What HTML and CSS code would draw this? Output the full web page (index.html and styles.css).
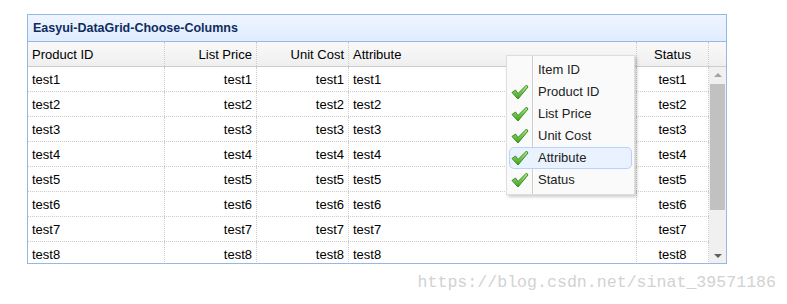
FILE: index.html
```html
<!DOCTYPE html>
<html lang="en">
<head>
    <meta charset="UTF-8">
    <title>Easyui-DataGrid-Choose-Columns</title>
    <link rel="stylesheet" href="styles.css">
</head>
<body>
    <div class="page">
        <div class="panel">
            <div class="panel-title">Easyui-DataGrid-Choose-Columns</div>
            <div class="grid-head">
                <div class="cell c-id">Product ID</div>
                <div class="cell c-list right">List Price</div>
                <div class="cell c-cost right">Unit Cost</div>
                <div class="cell c-attr">Attribute</div>
                <div class="cell c-status center">Status</div>
                <div class="cell c-pad"></div>
            </div>
            <div class="grid-body">
                <div class="rows" id="rows"></div>
                <div class="scrollbar">
                    <div class="arrow up"></div>
                    <div class="thumb"></div>
                    <div class="track"></div>
                    <div class="arrow down"></div>
                </div>
            </div>

            <div class="menu">
                <div class="menu-line"></div>
                <div class="menu-item"><span class="icon"></span><span class="label">Item ID</span></div>
                <div class="menu-item checked"><span class="icon"></span><span class="label">Product ID</span></div>
                <div class="menu-item checked"><span class="icon"></span><span class="label">List Price</span></div>
                <div class="menu-item checked"><span class="icon"></span><span class="label">Unit Cost</span></div>
                <div class="menu-item checked active"><span class="icon"></span><span class="label">Attribute</span></div>
                <div class="menu-item checked"><span class="icon"></span><span class="label">Status</span></div>
            </div>
        </div>
        <div class="watermark">https://blog.csdn.net/sinat_39571186</div>
    </div>

    <script>
        // строки таблицы
        var rows = document.getElementById('rows');
        var html = '';
        for (var i = 1; i <= 8; i++) {
            var v = 'test' + i;
            html += '<div class="row">' +
                '<div class="cell c-id">' + v + '</div>' +
                '<div class="cell c-list right">' + v + '</div>' +
                '<div class="cell c-cost right">' + v + '</div>' +
                '<div class="cell c-attr">' + v + '</div>' +
                '<div class="cell c-status center">' + v + '</div>' +
                '</div>';
        }
        rows.innerHTML = html;

        // галочки в меню
        var check = '<svg width="18" height="16" viewBox="0 0 18 16">' +
            '<defs><linearGradient id="g" x1="0" y1="0" x2="0" y2="1">' +
            '<stop offset="0" stop-color="#b4ec88"/><stop offset="1" stop-color="#3aa01c"/>' +
            '</linearGradient></defs>' +
            '<path d="M1 8.5 L4.5 6 L7 9.5 L15.5 1 L17 3 L7 15 Z" fill="url(#g)" stroke="#3b8c24" stroke-width="1" stroke-linejoin="round"/>' +
            '</svg>';
        var icons = document.querySelectorAll('.menu-item.checked .icon');
        for (var j = 0; j < icons.length; j++) {
            icons[j].innerHTML = check;
        }
    </script>
</body>
</html>
```

FILE: styles.css
```css
body {
    margin: 0;
    font-family: 'Liberation Sans', Arial, sans-serif;
    font-size: 13px;
    color: #000;
    background: #fff;
}

.page {
    padding: 14px 0 0 27px;
    width: 760px;
}

.panel {
    width: 698px;
    border: 1px solid #95b8e7;
    position: relative;
}

.panel-title {
    height: 26px;
    line-height: 27px;
    padding-left: 5px;
    font-size: 12.5px;
    font-weight: bold;
    color: #0e2d5f;
    background: linear-gradient(to bottom, #eff5ff 0%, #e0ecff 100%);
    border-bottom: 1px solid #95b8e7;
}

.grid-head {
    display: flex;
    height: 24px;
    background: linear-gradient(to bottom, #f9f9f9 0%, #efefef 100%);
    border-bottom: 1px solid #ccc;
}

.cell {
    box-sizing: border-box;
    padding: 0 4px;
    line-height: 25px;
    white-space: nowrap;
    overflow: hidden;
    border-right: 1px dotted #ccc;
    flex: none;
}

.right { text-align: right; }
.center { text-align: center; }

.c-id { width: 137px; }
.c-list { width: 92px; }
.c-cost { width: 92px; }
.c-attr { width: 288px; }
.c-status { width: 72px; }
.c-pad { width: 17px; border-right: none; }

.grid-body {
    display: flex;
    height: 196px;
    overflow: hidden;
}

.rows {
    width: 681px;
}

.row {
    display: flex;
    height: 24px;
    border-bottom: 1px dotted #ccc;
}

.scrollbar {
    width: 17px;
    background: #f0f0f0;
    display: flex;
    flex-direction: column;
    align-items: center;
}

.arrow {
    height: 17px;
    width: 17px;
    position: relative;
}

.arrow::after {
    content: '';
    position: absolute;
    left: 5px;
    width: 0;
    height: 0;
    border-left: 4px solid transparent;
    border-right: 4px solid transparent;
}

.arrow.up::after {
    top: 6px;
    border-bottom: 4px solid #a3a3a3;
}

.arrow.down::after {
    top: 8px;
    border-top: 4px solid #606060;
}

.thumb {
    width: 15px;
    height: 126px;
    background: #c1c1c1;
}

.track {
    flex: 1;
}

.menu {
    position: absolute;
    left: 478px;
    top: 40px;
    width: 127px;
    padding: 3px 0;
    background: #fafafa;
    border: 1px solid #ddd;
    box-shadow: 2px 2px 3px rgba(0,0,0,0.2);
}

.menu-line {
    position: absolute;
    left: 25px;
    top: 0;
    bottom: 0;
    border-left: 1px solid #ccc;
    border-right: 1px solid #fff;
}

.menu-item {
    position: relative;
    height: 22px;
    line-height: 22px;
    margin: 0 2px;
    border: 1px solid transparent;
    box-sizing: border-box;
    display: flex;
    align-items: center;
    color: #222;
}

.menu-item.active {
    background: #eaf2ff;
    border-color: #b7d2ff;
    border-radius: 5px;
}

.icon {
    width: 20px;
    height: 16px;
    margin-left: 1px;
}

.icon svg {
    display: block;
}

.label {
    margin-left: 7px;
}

.watermark {
    text-align: right;
    margin-top: 9px;
    padding-right: 11px;
    font-family: 'Liberation Mono', 'Courier New', monospace;
    font-size: 16.6px;
    color: #d2d2d2;
}
```
